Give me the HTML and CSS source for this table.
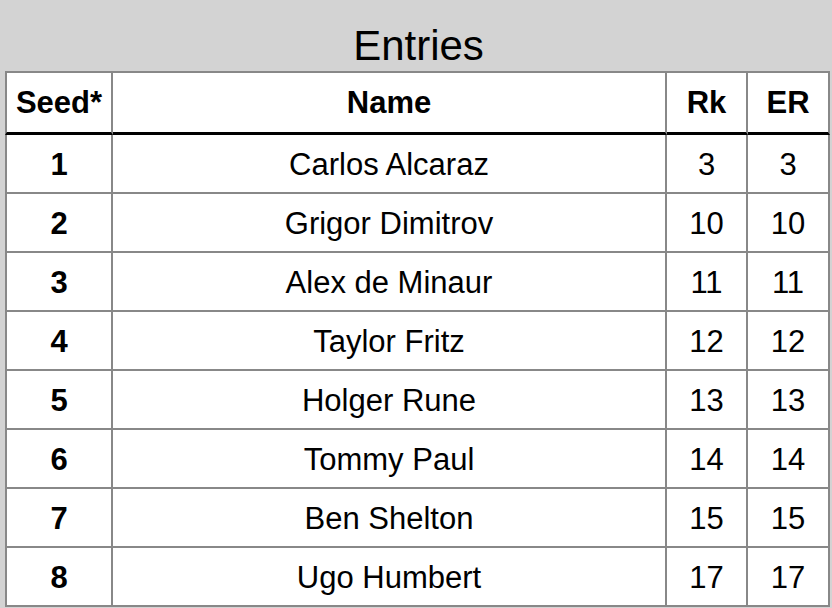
FILE: index.html
```html
<!DOCTYPE html>
<html lang="en">
<head>
<meta charset="utf-8">
<title>Entries</title>
<link rel="stylesheet" href="styles.css">
</head>
<body>
<div class="page">
  <h1 class="title">Entries</h1>
  <table class="entries">
    <thead>
      <tr>
        <th class="c-seed">Seed*</th>
        <th class="c-name">Name</th>
        <th class="c-rk">Rk</th>
        <th class="c-er">ER</th>
      </tr>
    </thead>
    <tbody>
      <tr><td class="seed">1</td><td>Carlos Alcaraz</td><td>3</td><td>3</td></tr>
      <tr><td class="seed">2</td><td>Grigor Dimitrov</td><td>10</td><td>10</td></tr>
      <tr><td class="seed">3</td><td>Alex de Minaur</td><td>11</td><td>11</td></tr>
      <tr><td class="seed">4</td><td>Taylor Fritz</td><td>12</td><td>12</td></tr>
      <tr><td class="seed">5</td><td>Holger Rune</td><td>13</td><td>13</td></tr>
      <tr><td class="seed">6</td><td>Tommy Paul</td><td>14</td><td>14</td></tr>
      <tr><td class="seed">7</td><td>Ben Shelton</td><td>15</td><td>15</td></tr>
      <tr><td class="seed">8</td><td>Ugo Humbert</td><td>17</td><td>17</td></tr>
    </tbody>
  </table>
</div>
</body>
</html>
```

FILE: styles.css
```css
html, body {
  margin: 0;
  padding: 0;
  background: #d3d3d3;
}

body {
  font-family: "Liberation Sans", Arial, sans-serif;
  color: #000;
  width: 832px;
  height: 608px;
  overflow: hidden;
}

.page {
  padding-left: 5px;
}

.title {
  margin: 0;
  height: 51px;
  padding-top: 20px;
  font-size: 42px;
  font-weight: normal;
  line-height: 51px;
  text-align: center;
}

.entries {
  border-collapse: separate;
  border-spacing: 0;
  background: #fff;
  table-layout: fixed;
}

.entries th,
.entries td {
  padding: 0;
  text-align: center;
  vertical-align: middle;
  font-size: 31px;
  border-right: 2px solid #888;
  border-bottom: 2px solid #888;
}

.entries th:first-child,
.entries td:first-child {
  border-left: 2px solid #888;
}

.entries th {
  border-top: 2px solid #888;
  border-bottom: 3px solid #000;
  height: 59px;
  font-weight: bold;
}

.entries td {
  height: 57px;
  font-weight: normal;
  padding-top: 2px;
  height: 55px;
}

.entries td.seed {
  font-weight: bold;
}

.c-seed { width: 104px; }
.c-name { width: 552px; }
.c-rk { width: 79px; }
.c-er { width: 80px; }
```
